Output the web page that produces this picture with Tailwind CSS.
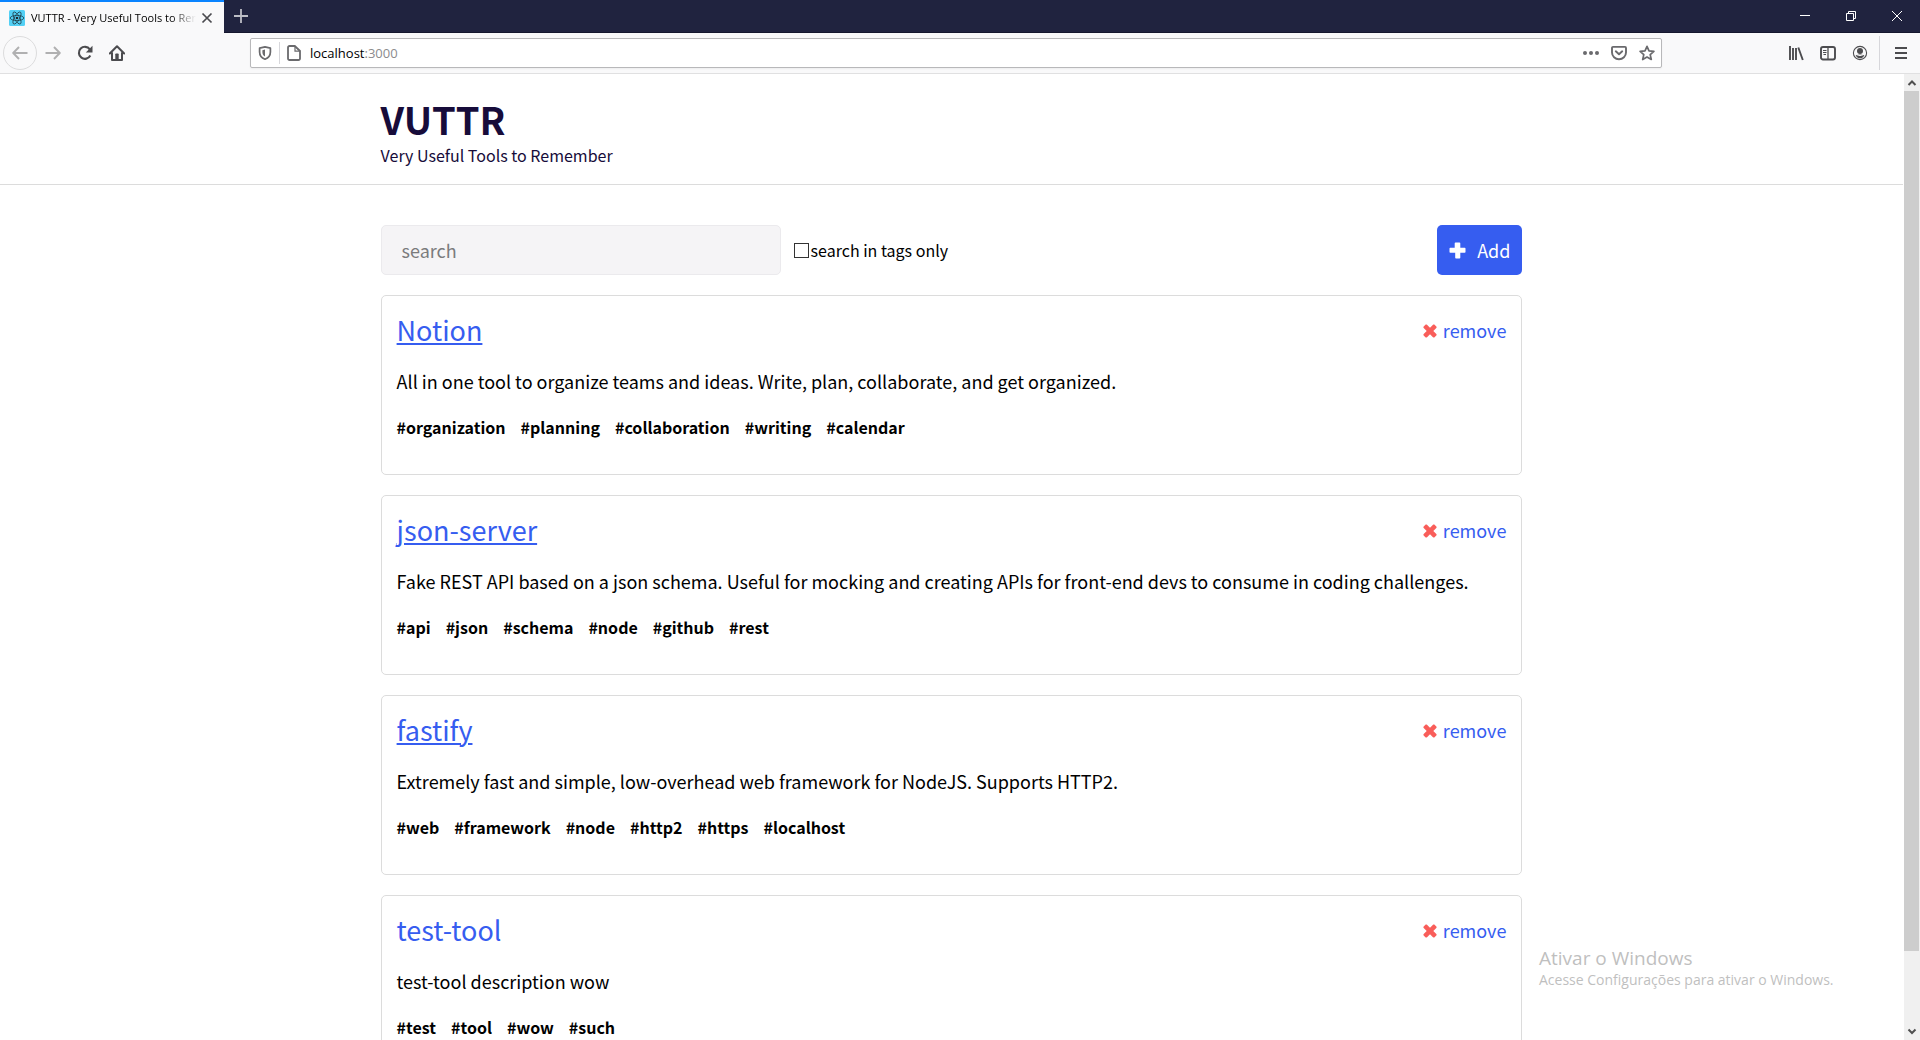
<!DOCTYPE html>
<html lang="en">
<head>
<meta charset="utf-8">
<title>VUTTR - Very Useful Tools to Remember</title>
<script src="https://cdn.jsdelivr.net/npm/@tailwindcss/browser@4"></script>
</head>
<body class="relative flex h-screen flex-col overflow-hidden bg-white font-['Noto_Sans_CJK_SC','Noto_Sans',sans-serif] text-black">

<svg class="hidden">
  <symbol id="cross" viewBox="0 0 14 14"><path fill="currentColor" d="M13.6 10.7c0 .3-.1.6-.3.8l-1.7 1.7c-.2.2-.5.3-.8.3s-.6-.1-.8-.3L7 10.200l-3 3c-.2.2-.5.3-.8.3s-.6-.1-.8-.3L.7 11.500c-.2-.2-.3-.5-.3-.8s.1-.6.3-.8l3-2.900-3-2.900c-.2-.2-.3-.5-.3-.8s.1-.6.3-.8L2.400.8c.2-.2.5-.3.8-.3s.6.1.8.3l3 3 3-3c.2-.2.5-.3.8-.3s.6.1.8.3l1.700 1.700c.2.2.3.5.3.8s-.1.6-.3.8l-3 2.900 3 2.900c.2.2.3.5.3.8z"/></symbol>
</svg>

<!-- Tab strip -->
<div class="flex h-[33px] shrink-0 items-stretch border-b border-[#15172e] bg-[#20233f] font-['Open_Sans',sans-serif]">
  <div class="-mb-px flex w-56 items-center border-t-2 border-[#0a84ff] bg-[#f9f9fa] pl-[9px] pr-2">
    <svg class="size-4 shrink-0" viewBox="0 0 16 16"><rect width="16" height="16" rx="1.500" fill="#53d0f5"/><g fill="none" stroke="#20404c" stroke-width=".8"><ellipse cx="8" cy="8" rx="6.800" ry="2.600"/><ellipse cx="8" cy="8" rx="6.800" ry="2.600" transform="rotate(60 8 8)"/><ellipse cx="8" cy="8" rx="6.800" ry="2.600" transform="rotate(120 8 8)"/></g><circle cx="8" cy="8" r="1.300" fill="#20232a"/></svg>
    <span class="ml-1.5 w-[165px] overflow-hidden whitespace-nowrap text-[11px] leading-4 mask-r-from-85%">VUTTR - Very Useful Tools to Remember</span>
    <button class="ml-[5px] size-3" aria-label="Close tab"><svg class="size-3" viewBox="0 0 12 12"><path d="M1.500 1.500l9 9M10.500 1.500l-9 9" stroke="#4a4a4f" stroke-width="1.700"/></svg></button>
  </div>
  <button class="ml-2.5 flex items-center" aria-label="New tab"><svg class="size-3.5" viewBox="0 0 14 14"><path d="M7 0v14M0 7h14" stroke="#bcbdc5" stroke-width="1.800"/></svg></button>
  <div class="ml-auto flex">
    <button class="flex w-[46px] items-center justify-center" aria-label="Minimize"><svg class="size-2.5" viewBox="0 0 10 10"><path d="M0 4.500h10" stroke="#fff"/></svg></button>
    <button class="flex w-[46px] items-center justify-center" aria-label="Restore"><svg class="size-2.5" viewBox="0 0 10 10"><path d="M.5 2.500h7v7h-7zM2.500 2.500v-2h7v7h-2" fill="none" stroke="#fff"/></svg></button>
    <button class="flex w-[46px] items-center justify-center" aria-label="Close"><svg class="size-2.5" viewBox="0 0 10 10"><path d="M0 0l10 10M10 0L0 10" stroke="#fff"/></svg></button>
  </div>
</div>

<!-- Navigation bar -->
<div class="flex h-[41px] shrink-0 items-center border-b border-[#e0e0e1] bg-[#f9f9fa] pl-[3px] pr-3 text-[#4c4c4f]">
  <button class="flex size-[34px] items-center justify-center rounded-full border border-[#dcdcdd] text-[#b0b0b1]" aria-label="Back"><svg class="size-4" viewBox="0 0 16 16"><path d="M15.500 8H1.500M7 2L1.200 8 7 14" fill="none" stroke="currentColor" stroke-width="1.900" stroke-linejoin="round"/></svg></button>
  <button class="ml-2 text-[#b0b0b1]" aria-label="Forward"><svg class="size-4" viewBox="0 0 16 16"><path d="M.5 8h14M9 2l5.800 6L9 14" fill="none" stroke="currentColor" stroke-width="1.900" stroke-linejoin="round"/></svg></button>
  <button class="ml-4" aria-label="Reload"><svg class="size-4" viewBox="0 0 16 16"><path d="M13.300 10.500A6 6 0 1 1 12.800 4.300" fill="none" stroke="currentColor" stroke-width="2.100"/><path d="M15.500.8v6.700H8.800z" fill="currentColor"/></svg></button>
  <button class="ml-4" aria-label="Home"><svg class="size-4" viewBox="0 0 16 16"><path d="M.8 8.500L8 1.300l7.200 7.200M3 8v7h10V8" fill="none" stroke="currentColor" stroke-width="2" stroke-linejoin="round" stroke-linecap="round"/><path d="M6.300 14.500V9.300q0-.8.800-.8h1.800q.8 0 .8.800v5.200z" fill="currentColor"/></svg></button>

  <div class="ml-[125px] flex h-[30px] flex-1 items-center rounded-xs border border-[#b8b8ba] bg-white pl-[7px] pr-1.5 shadow-xs">
    <svg class="size-3.5" viewBox="0 0 14 14"><path d="M7 .9L12.400 2.200V6c0 3.600-2 6-5.400 7.200C3.600 12 1.600 9.600 1.600 6V2.200z" fill="none" stroke="#6a6a6d" stroke-width="1.700" stroke-linejoin="round"/><path d="M7 3.500v7C5.200 9.500 4.400 8 4.400 6V4.200z" fill="#6a6a6d"/></svg>
    <span class="ml-[7px] h-[22px] w-px bg-[#d7d7db]"></span>
    <svg class="ml-1.5 size-4" viewBox="0 0 16 16"><path d="M3.500 1h5.300L14 6v7.500a1.500 1.500 0 0 1-1.500 1.500h-9A1.500 1.500 0 0 1 2 13.500v-11A1.500 1.500 0 0 1 3.500 1z" fill="none" stroke="#6a6a6d" stroke-width="1.800"/><path d="M9 1v5.200h5" fill="none" stroke="#6a6a6d" stroke-width="1.200"/></svg>
    <div class="relative ml-2 h-5 min-w-0 flex-1 font-['Open_Sans',sans-serif] text-[13px] leading-5">
      <input type="text" aria-label="Address" class="absolute inset-0 w-full bg-transparent outline-none">
      <span class="pointer-events-none relative text-black">localhost<span class="text-[#8b8b8d]">:3000</span></span>
    </div>
    <button aria-label="Page actions"><svg class="size-4" viewBox="0 0 16 16" fill="#6a6a6d"><circle cx="2" cy="8" r="2"/><circle cx="8" cy="8" r="2"/><circle cx="14" cy="8" r="2"/></svg></button>
    <button class="ml-3" aria-label="Save to Pocket"><svg class="size-4" viewBox="0 0 16 16" fill="none" stroke="#6a6a6d" stroke-width="1.900" stroke-linecap="round" stroke-linejoin="round"><path d="M2 1.900h12a1 1 0 0 1 1 1V7.500a7 6.700 0 0 1-14 0V2.900a1 1 0 0 1 1-1z"/><path d="M4.800 6.300L8 9.300l3.200-3"/></svg></button>
    <button class="ml-3" aria-label="Bookmark"><svg class="size-4" viewBox="0 0 16 16"><path d="M8 1.300l2 4.500 4.900.5-3.700 3.300 1.100 4.900L8 12l-4.300 2.500 1.100-4.900L1.100 6.300 6 5.800z" fill="none" stroke="#6a6a6d" stroke-width="1.700" stroke-linejoin="round"/></svg></button>
  </div>

  <button class="ml-[126px]" aria-label="Library"><svg class="size-4" viewBox="0 0 16 16"><path d="M2 1v14M5 3v12M8 3v12M10.300 2.500L14.800 15" stroke="currentColor" stroke-width="1.900" fill="none"/></svg></button>
  <button class="ml-4" aria-label="Sidebars"><svg class="size-4" viewBox="0 0 16 16" fill="none" stroke="currentColor"><rect x="1" y="2" width="14" height="12.500" rx="2" stroke-width="1.900"/><path d="M8 2v12" stroke-width="1.300"/><path d="M3 5.500h3.500M3 7.500h3.500M3.500 9.500h2.500" stroke-width="1"/></svg></button>
  <button class="ml-4" aria-label="Account"><svg class="size-4" viewBox="0 0 16 16"><circle cx="8" cy="8" r="6.600" fill="none" stroke="currentColor" stroke-width="1.100"/><circle cx="8" cy="6" r="3" fill="currentColor"/><path d="M3.600 10.200Q8 8.600 12.400 10.200 11 13.300 8 13.300T3.600 10.200z" fill="currentColor"/><path d="M4.500 9.700Q8 11.500 11.500 9.700" fill="none" stroke="#f9f9fa"/></svg></button>
  <span class="ml-[11px] h-[34px] w-px bg-[#d7d7db]"></span>
  <button class="ml-[14px]" aria-label="Menu"><svg class="h-4 w-3.5" viewBox="0 0 14 16"><path d="M1 3h12M1 8h12M1 13h12" stroke="currentColor" stroke-width="2"/></svg></button>
</div>

<div class="flex min-h-0 flex-1">
  <!-- Page -->
  <div class="min-w-0 flex-1 overflow-hidden">
    <header class="border-b border-[#dcdcdc] pt-5 pb-[17px] text-[#170c3a]">
      <div class="mx-auto w-[60%]">
        <h1 class="text-[38px] leading-[49px] font-bold">VUTTR</h1>
        <p class="text-base leading-6">Very Useful Tools to Remember</p>
      </div>
    </header>

    <main class="mx-auto mt-10 w-[60%]">
      <div class="flex items-center">
        <input type="search" aria-label="Search" placeholder="search" class="h-[50px] w-[400px] rounded-[5px] border border-[#ebeaed] bg-[#f5f4f6] px-5 text-lg leading-6 outline-none placeholder:text-[#7b7b7d]">
        <label class="ml-[13px] flex items-center gap-0.5 text-base leading-6"><input type="checkbox" class="size-[15px] appearance-none border border-[#333] bg-white">search in tags only</label>
        <button class="ml-auto flex h-[50px] items-center gap-[11px] rounded-[5px] bg-[#365df0] px-3 text-lg leading-6 text-white"><svg class="size-[17px]" viewBox="0 0 17 17"><path d="M6.500 0.500h4a.8.800 0 0 1 .8.800v4.400h4.400a.8.800 0 0 1 .8.800v3.500a.8.800 0 0 1-.8.800h-4.400v4.900a.8.800 0 0 1-.8.800h-3.500a.8.800 0 0 1-.8-.8v-4.900H1.300a.8.800 0 0 1-.8-.8V6.500a.8.800 0 0 1 .8-.8h4.400V1.300a.8.800 0 0 1 .8-.8z" fill="#fff"/></svg>Add</button>
      </div>

      <section class="mt-5 flex flex-col gap-5">
        <article class="h-[180px] rounded-[5px] border border-[#dcdcdc] p-[15px]">
          <div class="flex items-center justify-between">
            <h2 class="text-[27px] leading-[38px] text-[#365df0]"><a href="#notion" class="underline decoration-2 underline-offset-2">Notion</a></h2>
            <button class="flex items-center gap-1.5 text-lg leading-6 text-[#365df0]"><svg class="mt-0.5 size-3.5 text-[#f95e5a]"><use href="#cross"/></svg>remove</button>
          </div>
          <p class="mt-[18px] text-lg leading-7">All in one tool to organize teams and ideas. Write, plan, collaborate, and get organized.</p>
          <ul class="mt-5 flex gap-[15px] text-base leading-6 font-bold"><li>#organization</li><li>#planning</li><li>#collaboration</li><li>#writing</li><li>#calendar</li></ul>
        </article>

        <article class="h-[180px] rounded-[5px] border border-[#dcdcdc] p-[15px]">
          <div class="flex items-center justify-between">
            <h2 class="text-[27px] leading-[38px] text-[#365df0]"><a href="#json-server" class="underline decoration-2 underline-offset-2">json-server</a></h2>
            <button class="flex items-center gap-1.5 text-lg leading-6 text-[#365df0]"><svg class="mt-0.5 size-3.5 text-[#f95e5a]"><use href="#cross"/></svg>remove</button>
          </div>
          <p class="mt-[18px] text-lg leading-7">Fake REST API based on a json schema. Useful for mocking and creating APIs for front-end devs to consume in coding challenges.</p>
          <ul class="mt-5 flex gap-[15px] text-base leading-6 font-bold"><li>#api</li><li>#json</li><li>#schema</li><li>#node</li><li>#github</li><li>#rest</li></ul>
        </article>

        <article class="h-[180px] rounded-[5px] border border-[#dcdcdc] p-[15px]">
          <div class="flex items-center justify-between">
            <h2 class="text-[27px] leading-[38px] text-[#365df0]"><a href="#fastify" class="underline decoration-2 underline-offset-2">fastify</a></h2>
            <button class="flex items-center gap-1.5 text-lg leading-6 text-[#365df0]"><svg class="mt-0.5 size-3.5 text-[#f95e5a]"><use href="#cross"/></svg>remove</button>
          </div>
          <p class="mt-[18px] text-lg leading-7">Extremely fast and simple, low-overhead web framework for NodeJS. Supports HTTP2.</p>
          <ul class="mt-5 flex gap-[15px] text-base leading-6 font-bold"><li>#web</li><li>#framework</li><li>#node</li><li>#http2</li><li>#https</li><li>#localhost</li></ul>
        </article>

        <article class="h-[180px] rounded-[5px] border border-[#dcdcdc] p-[15px]">
          <div class="flex items-center justify-between">
            <h2 class="text-[27px] leading-[38px] text-[#365df0]"><a href="#test-tool">test-tool</a></h2>
            <button class="flex items-center gap-1.5 text-lg leading-6 text-[#365df0]"><svg class="mt-0.5 size-3.5 text-[#f95e5a]"><use href="#cross"/></svg>remove</button>
          </div>
          <p class="mt-[18px] text-lg leading-7">test-tool description wow</p>
          <ul class="mt-5 flex gap-[15px] text-base leading-6 font-bold"><li>#test</li><li>#tool</li><li>#wow</li><li>#such</li></ul>
        </article>
      </section>
    </main>
  </div>

  <!-- Scrollbar -->
  <div class="flex w-[17px] shrink-0 flex-col border-l border-white bg-[#f0f0f0]">
    <svg class="h-[17px] w-4 shrink-0" viewBox="0 0 16 17"><path d="M4.500 11L8 7.500 11.500 11" fill="none" stroke="#505050" stroke-width="2"/></svg>
    <div class="mr-px h-[89%] bg-[#cdcdcd]"></div>
    <svg class="mt-auto h-[17px] w-4 shrink-0" viewBox="0 0 16 17"><path d="M4.500 6.500L8 10l3.500-3.500" fill="none" stroke="#505050" stroke-width="2"/></svg>
  </div>
</div>

<!-- Windows activation notice -->
<div class="pointer-events-none absolute right-20 bottom-[50px] w-[301px] font-['Open_Sans',sans-serif] whitespace-nowrap text-[#bfbfbf]">
  <p class="text-[19px] leading-6">Ativar o Windows</p>
  <p class="text-sm leading-5">Acesse Configurações para ativar o Windows.</p>
</div>
</body>
</html>
